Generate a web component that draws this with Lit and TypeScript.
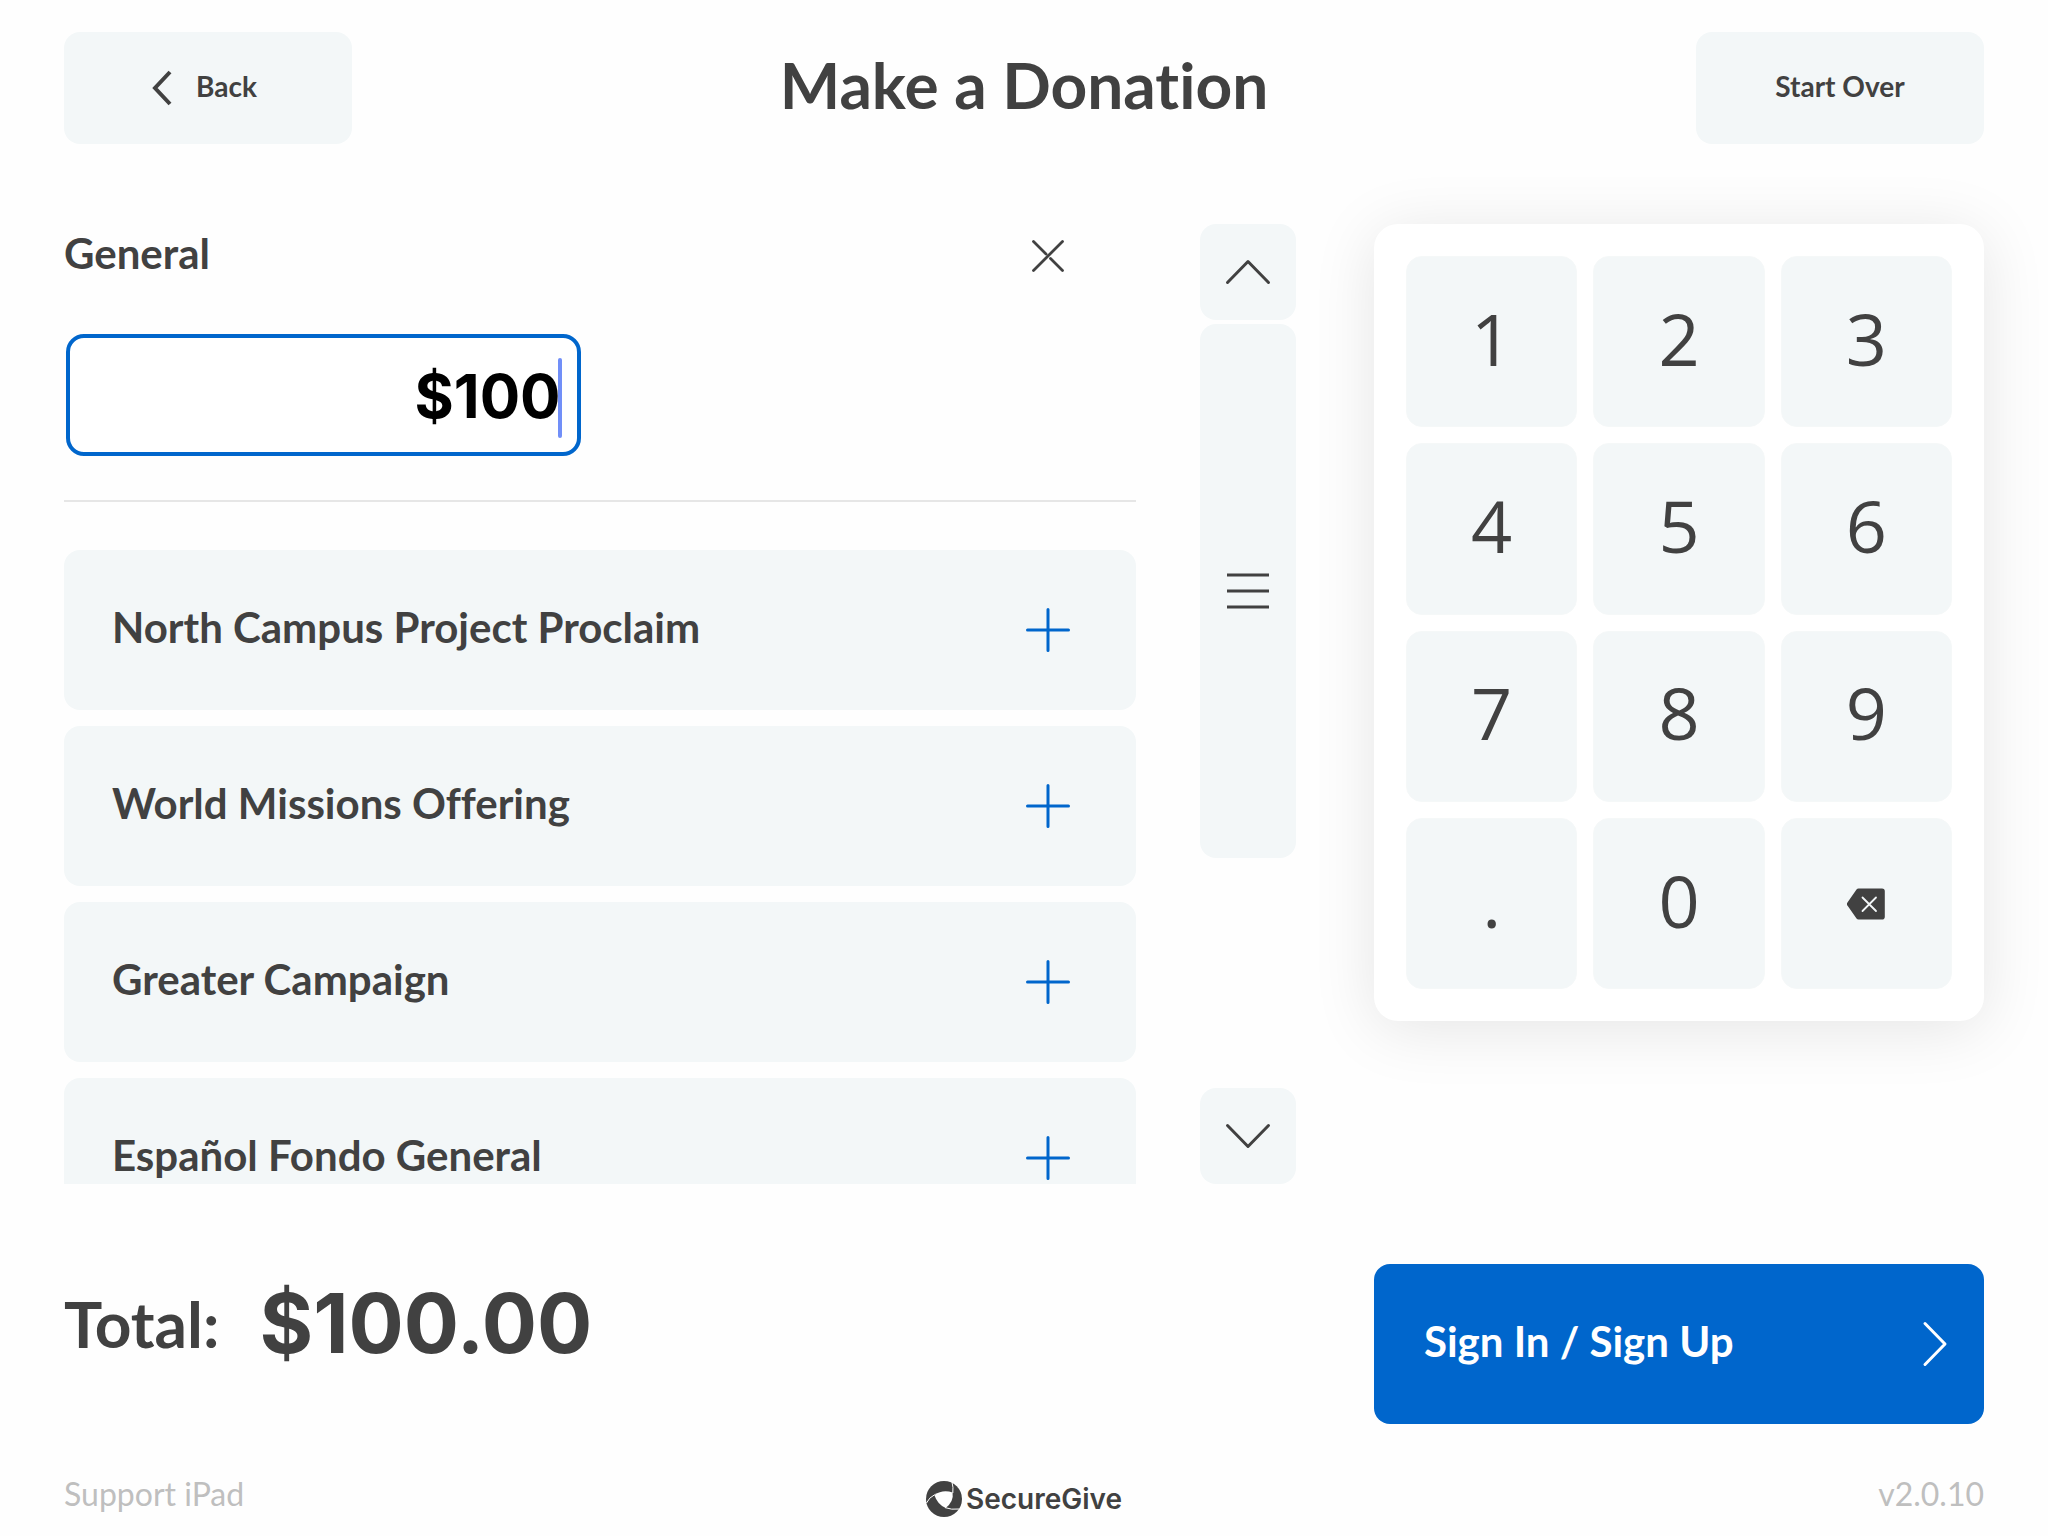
import { LitElement, html, css } from "lit";
import { customElement, property, state, query } from "lit/decorators.js";

@customElement("fund-item")
class FundItem extends LitElement {
  @property() name = "";

  static styles = css`
    :host {
      display: block;
      flex: none;
    }
    .fund {
      display: flex;
      align-items: center;
      justify-content: space-between;
      box-sizing: border-box;
      width: 100%;
      height: 160px;
      padding: 0 66px 0 48px;
      border: 0;
      border-radius: 16px;
      background: #f3f7f8;
      color: #414141;
      font: 700 42px/48px Lato, sans-serif;
      font-variant-ligatures: none;
      text-align: left;
      cursor: pointer;
    }
    .name {
      padding-bottom: 6px;
    }
    .plus {
      flex: none;
    }
  `;

  render() {
    return html`
      <button class="fund" type="button">
        <span class="name">${this.name}</span>
        <svg class="plus" width="44" height="44" viewBox="0 0 44 44" fill="none" stroke="#0066cc" stroke-width="3" stroke-linecap="round" aria-hidden="true">
          <path d="M22 1.500v41M1.500 22h41" />
        </svg>
      </button>
    `;
  }
}

@customElement("key-pad")
class KeyPad extends LitElement {
  private keys = ["1", "2", "3", "4", "5", "6", "7", "8", "9", ".", "0", "back"];

  static styles = css`
    :host {
      display: grid;
      grid-template-columns: repeat(3, minmax(0, 1fr));
      gap: 16px;
      padding: 32px;
      border-radius: 24px;
      background: #fff;
      box-shadow: 0 8px 64px rgba(0, 0, 0, 0.1);
    }
    .key {
      display: flex;
      align-items: center;
      justify-content: center;
      box-sizing: border-box;
      aspect-ratio: 1;
      margin: 0;
      padding: 0;
      border: 1px solid #f5f8f8;
      border-radius: 16px;
      background: #f3f7f8;
      color: #414141;
      font: 400 72px/80px "Open Sans", sans-serif;
      cursor: pointer;
    }
    .digit {
      padding-bottom: 8px;
    }
  `;

  private press(key: string) {
    this.dispatchEvent(new CustomEvent("key-press", { detail: key }));
  }

  render() {
    return this.keys.map((key) =>
      key === "back"
        ? html`
            <button class="key" type="button" aria-label="Delete" @click=${() => this.press(key)}>
              <svg width="38" height="32" viewBox="0 0 38 32" aria-hidden="true">
                <path
                  d="M11.5 .5H35a2.800 2.800 0 0 1 2.800 2.800V28.700A2.800 2.800 0 0 1 35 31.500H11.500a2.500 2.500 0 0 1-2-1L.8 18a3 3 0 0 1 0-4L9.500 1.500a2.500 2.500 0 0 1 2-1z"
                  fill="#414141"
                />
                <path d="M15.500 9.500l13.500 13.500M29 9.500L15.500 23" stroke="#f3f7f8" stroke-width="1.800" stroke-linecap="round" />
              </svg>
            </button>
          `
        : html`
            <button class="key" type="button" @click=${() => this.press(key)}>
              <span class="digit">${key}</span>
            </button>
          `
    );
  }
}

@customElement("app-root")
class AppRoot extends LitElement {
  @state() private amount = "100";
  @state() private thumb = 70.3;
  @query(".list") private list!: HTMLElement;

  private funds = [
    "North Campus Project Proclaim",
    "World Missions Offering",
    "Greater Campaign",
    "Español Fondo General",
  ];

  static styles = css`
    :host {
      display: flex;
      flex-direction: column;
      box-sizing: border-box;
      height: 100vh;
      padding: 32px 64px 0;
      overflow: hidden;
      background: #fefefe;
      color: #414141;
      font-family: Lato, sans-serif;
      font-variant-ligatures: none;
    }
    button {
      margin: 0;
      padding: 0;
      border: 0;
      font: inherit;
      color: inherit;
      cursor: pointer;
    }
    svg {
      display: block;
      flex: none;
    }
    .top {
      display: flex;
      align-items: center;
      justify-content: space-between;
      flex: none;
    }
    .nav {
      display: flex;
      align-items: center;
      justify-content: center;
      gap: 24px;
      box-sizing: border-box;
      width: 288px;
      height: 112px;
      border-radius: 16px;
      background: #f3f7f8;
      font-size: 28px;
      line-height: 32px;
      font-weight: 700;
    }
    .nav.back {
      padding-right: 8px;
    }
    .nav span {
      padding-bottom: 4px;
    }
    .title {
      margin: 0;
      padding-bottom: 6px;
      font-size: 64px;
      line-height: 72px;
      font-weight: 700;
    }
    .columns {
      display: grid;
      grid-template-columns: minmax(0, 1232fr) minmax(0, 610fr);
      column-gap: 78px;
    }
    .main {
      flex: 1 1 0;
      min-height: 0;
      grid-template-rows: minmax(0, 1fr);
      margin-top: 80px;
    }
    .funds {
      display: flex;
      gap: 64px;
      min-width: 0;
    }
    .list {
      display: flex;
      flex: 1;
      flex-direction: column;
      gap: 16px;
      min-width: 0;
      overflow: hidden;
    }
    .selected {
      flex: none;
      margin-bottom: 32px;
      padding-bottom: 44px;
      border-bottom: 2px solid #e6e6e6;
    }
    .selected-head {
      display: flex;
      align-items: center;
      justify-content: space-between;
      height: 64px;
      padding-right: 66px;
    }
    .label {
      padding-bottom: 6px;
      font-size: 42px;
      line-height: 48px;
      font-weight: 700;
    }
    .remove {
      display: grid;
      place-items: center;
      width: 44px;
      height: 44px;
      background: none;
    }
    .field {
      position: relative;
      width: 48%;
      margin: 46px 0 0 2px;
    }
    .amount {
      display: block;
      box-sizing: border-box;
      width: 100%;
      height: 122px;
      padding: 2px 16px 0 24px;
      border: 4px solid #0066cc;
      border-radius: 18px;
      outline: none;
      background: #fff;
      color: #000;
      font: 700 60px/72px Inter, sans-serif;
      text-align: right;
    }
    .caret {
      position: absolute;
      top: 24px;
      right: 19px;
      width: 4px;
      height: 80px;
      border-radius: 2px;
      background: rgba(65, 105, 245, 0.75);
    }
    .rail {
      display: flex;
      flex: none;
      flex-direction: column;
      gap: 4px;
      width: 96px;
    }
    .step,
    .thumb {
      display: grid;
      place-items: center;
      border-radius: 16px;
      background: #f3f7f8;
    }
    .step {
      flex: none;
      height: 96px;
    }
    .track {
      flex: 1;
      min-height: 0;
    }
    .pad {
      align-self: start;
    }
    .bottom {
      flex: none;
      align-items: center;
      margin-top: 80px;
    }
    .total {
      display: flex;
      align-items: center;
      gap: 40px;
      padding-bottom: 40px;
      font-weight: 700;
    }
    .total-label {
      font-size: 64px;
      line-height: 72px;
    }
    .total-value {
      font: 700 82px/96px Inter, sans-serif;
    }
    .sign {
      display: flex;
      align-items: center;
      justify-content: space-between;
      height: 160px;
      padding: 0 36px 0 50px;
      border-radius: 16px;
      background: #0066cc;
      color: #fff;
    }
    .foot {
      display: grid;
      grid-template-columns: 1fr auto 1fr;
      align-items: center;
      flex: none;
      box-sizing: border-box;
      height: 112px;
      padding-bottom: 16px;
      padding-top: 44px;
      color: #bfbfbf;
      font-size: 32px;
      line-height: 40px;
    }
    .brand {
      display: flex;
      align-items: center;
      gap: 4px;
      padding-top: 10px;
      color: #414141;
      font: 600 28px/36px Inter, sans-serif;
    }
    .version {
      text-align: right;
    }
  `;

  private onKey(e: CustomEvent<string>) {
    this.amount = e.detail === "back" ? this.amount.slice(0, -1) : this.amount + e.detail;
  }

  private onInput(e: Event) {
    this.amount = (e.target as HTMLInputElement).value.replace(/[^\d.]/g, "");
  }

  private scrollList(delta: number) {
    this.list.scrollBy({ top: delta, behavior: "smooth" });
  }

  render() {
    return html`
      <header class="top">
        <button class="nav back" type="button">
          <svg width="21" height="36" viewBox="0 0 21 36" fill="none" stroke="#414141" stroke-width="4" aria-hidden="true">
            <path d="M19 2L4 18l15 16" />
          </svg>
          <span>Back</span>
        </button>
        <h1 class="title">Make a Donation</h1>
        <button class="nav" type="button"><span>Start Over</span></button>
      </header>

      <main class="columns main">
        <section class="funds">
          <div class="list">
            <div class="selected">
              <div class="selected-head">
                <label class="label" for="amount">General</label>
                <button class="remove" type="button" aria-label="Remove General">
                  <svg width="32" height="32" viewBox="0 0 32 32" fill="none" stroke="#414141" stroke-width="2.800" stroke-linecap="round" aria-hidden="true">
                    <path d="M1.500 30.500l29-29M1.500 1.500l12.500 12.500M18.500 18.500l12 12" />
                  </svg>
                </button>
              </div>
              <div class="field">
                <input id="amount" class="amount" type="text" inputmode="decimal" .value=${"$" + this.amount} @input=${this.onInput} />
                <span class="caret"></span>
              </div>
            </div>
            ${this.funds.map((name) => html`<fund-item name=${name}></fund-item>`)}
          </div>
          <div class="rail">
            <button class="step" type="button" aria-label="Scroll up" @click=${() => this.scrollList(-176)}>
              <svg width="46" height="26" viewBox="0 0 46 26" fill="none" stroke="#414141" stroke-width="3" stroke-linecap="round" stroke-linejoin="round" aria-hidden="true">
                <path d="M2.500 23.500L23 2.500l20.500 21" />
              </svg>
            </button>
            <div class="track">
              <div class="thumb" style="height:${this.thumb}%">
                <svg width="42" height="36" viewBox="0 0 42 36" stroke="#414141" stroke-width="3" aria-hidden="true">
                  <path d="M0 2h42M0 18h42M0 34h42" />
                </svg>
              </div>
            </div>
            <button class="step" type="button" aria-label="Scroll down" @click=${() => this.scrollList(176)}>
              <svg width="46" height="26" viewBox="0 0 46 26" fill="none" stroke="#414141" stroke-width="3" stroke-linecap="round" stroke-linejoin="round" aria-hidden="true">
                <path d="M2.500 2.500L23 23.500l20.500-21" />
              </svg>
            </button>
          </div>
        </section>
        <key-pad class="pad" @key-press=${this.onKey}></key-pad>
      </main>

      <section class="columns bottom">
        <div class="total">
          <span class="total-label">Total:</span>
          <span class="total-value">$${Number(this.amount || 0).toFixed(2)}</span>
        </div>
        <button class="sign" type="button">
          <span class="label">Sign In / Sign Up</span>
          <svg width="26" height="46" viewBox="0 0 26 46" fill="none" stroke="#fff" stroke-width="3" stroke-linecap="round" stroke-linejoin="round" aria-hidden="true">
            <path d="M3 2.500L23 23 3 43.500" />
          </svg>
        </button>
      </section>

      <footer class="foot">
        <span>Support iPad</span>
        <div class="brand">
          <svg width="36" height="36" viewBox="0 0 36 36" aria-hidden="true">
            <circle cx="18" cy="18" r="18" fill="#414141" />
            <path d="M8.300 14Q17 8 26.600 11.600 28 20.500 19.700 27 11.500 23.500 8.300 14z" fill="#fefefe" />
            <path
              d="M26 1.200Q27.500 6 26.800 12M8.800 13.600Q3 16.500.5 22M19 26.600Q25 29 33.500 28"
              fill="none"
              stroke="#fefefe"
              stroke-width="1"
            />
          </svg>
          <span>SecureGive</span>
        </div>
        <span class="version">v2.0.10</span>
      </footer>
    `;
  }
}
